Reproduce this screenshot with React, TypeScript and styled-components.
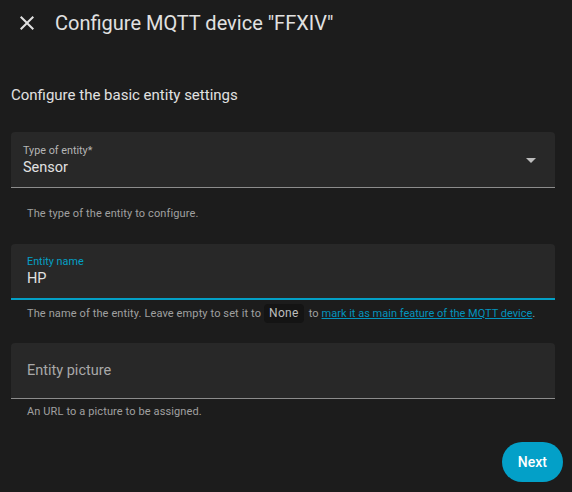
import React from 'react';
import styled, { createGlobalStyle } from 'styled-components';

const GlobalStyle = createGlobalStyle`
  html, body {
    margin: 0;
    padding: 0;
    background: #1c1c1c;
  }
  body {
    font-family: Roboto, "Noto Sans", sans-serif;
    color: #e1e1e1;
  }
`;

const Dialog = styled.div`
  width: 572px;
  height: 492px;
  background: #1c1c1c;
  display: flex;
  flex-direction: column;
  box-sizing: border-box;
`;

const Header = styled.div`
  display: flex;
  align-items: center;
  height: 46px;
  padding: 0 0 0 15px;
  gap: 16px;
`;

const CloseButton = styled.button`
  width: 24px;
  height: 24px;
  padding: 0;
  border: none;
  background: none;
  color: #e1e1e1;
  display: flex;
  cursor: pointer;
`;

const Title = styled.h2`
  margin: 0;
  font-size: 20px;
  font-weight: 400;
  color: #e1e1e1;
  line-height: 24px;
`;

const Content = styled.div`
  display: flex;
  flex-direction: column;
  padding: 0 17px 0 11px;
`;

const Intro = styled.p`
  margin: 39px 0 27px;
  font-size: 15px;
  line-height: 20px;
  color: #e1e1e1;
`;

const Field = styled.div<{ $focused?: boolean }>`
  position: relative;
  height: 56px;
  background: #282828;
  border-radius: 4px 4px 0 0;
  box-sizing: border-box;
  border-bottom: ${({ $focused }) => ($focused ? '2px solid #03a0c6' : '1px solid #8c8c8c')};
  display: flex;
  align-items: center;
  padding: 0 ${({ $focused }) => ($focused ? '16px' : '12px')};
`;

const FieldInner = styled.div`
  display: flex;
  flex-direction: column;
  flex: 1;
  padding-top: 2px;
`;

const FloatLabel = styled.span<{ $focused?: boolean }>`
  font-size: 10.8px;
  line-height: 14px;
  color: ${({ $focused }) => ($focused ? '#03a0c6' : '#b5b5b5')};
`;

const Value = styled.span`
  font-size: 14.5px;
  line-height: 20px;
  color: #e1e1e1;
`;

const Placeholder = styled.span`
  font-size: 14.5px;
  line-height: 20px;
  color: #a8a8a8;
  padding-left: 4px;
  padding-top: 1px;
`;

const Arrow = styled.span`
  width: 0;
  height: 0;
  border-left: 5px solid transparent;
  border-right: 5px solid transparent;
  border-top: 5px solid #bdbdbd;
  margin-right: 7px;
  margin-top: 1px;
`;

const Helper = styled.div<{ $gap: number; $top: number }>`
  font-size: 11px;
  letter-spacing: 0.12px;
  line-height: 16px;
  color: #a0a0a0;
  padding: ${({ $top }) => $top}px 16px 0 16px;
  margin-bottom: ${({ $gap }) => $gap}px;
  display: flex;
  align-items: center;
  white-space: nowrap;
`;

const Code = styled.code`
  font-family: Roboto, "Noto Sans", sans-serif;
  font-size: 12px;
  background: #141414;
  color: #bdbdbd;
  border-radius: 4px;
  padding: 1px 5px;
  margin: 0 5px 0 3px;
  line-height: 17px;
  letter-spacing: 0.3px;
`;

const Link = styled.a`
  color: #0393bd;
  text-decoration: underline;
  letter-spacing: 0;
`;

const Footer = styled.div`
  display: flex;
  justify-content: flex-end;
  padding: 22px 9px 0 0;
`;

const NextButton = styled.button`
  height: 40px;
  padding: 0 16px;
  border: none;
  border-radius: 20px;
  background: #03a0c8;
  color: #ffffff;
  font-family: Roboto, "Noto Sans", sans-serif;
  font-size: 14px;
  font-weight: 500;
  cursor: pointer;
`;

const App: React.FC = () => {
  return (
    <>
      <GlobalStyle />
      <Dialog>
        <Header>
          <CloseButton aria-label="Close">
            <svg width="24" height="24" viewBox="0 0 24 24" fill="currentColor">
              <path d="M19,6.41L17.59,5L12,10.59L6.41,5L5,6.41L10.59,12L5,17.59L6.41,19L12,13.41L17.59,19L19,17.59L13.41,12L19,6.41Z" />
            </svg>
          </CloseButton>
          <Title>Configure MQTT device "FFXIV"</Title>
        </Header>
        <Content>
          <Intro>Configure the basic entity settings</Intro>

          <Field>
            <FieldInner>
              <FloatLabel>Type of entity*</FloatLabel>
              <Value>Sensor</Value>
            </FieldInner>
            <Arrow />
          </Field>
          <Helper $top={18} $gap={22}>The type of the entity to configure.</Helper>

          <Field $focused>
            <FieldInner>
              <FloatLabel $focused>Entity name</FloatLabel>
              <Value>HP</Value>
            </FieldInner>
          </Field>
          <Helper $top={4} $gap={20}>
            The name of the entity. Leave empty to set it to <Code>None</Code> to&nbsp;
            <Link href="#">mark it as main feature of the MQTT device</Link>.
          </Helper>

          <Field>
            <Placeholder>Entity picture</Placeholder>
          </Field>
          <Helper $top={5} $gap={0}>An URL to a picture to be assigned.</Helper>
        </Content>
        <Footer>
          <NextButton>Next</NextButton>
        </Footer>
      </Dialog>
    </>
  );
};

export default App;
